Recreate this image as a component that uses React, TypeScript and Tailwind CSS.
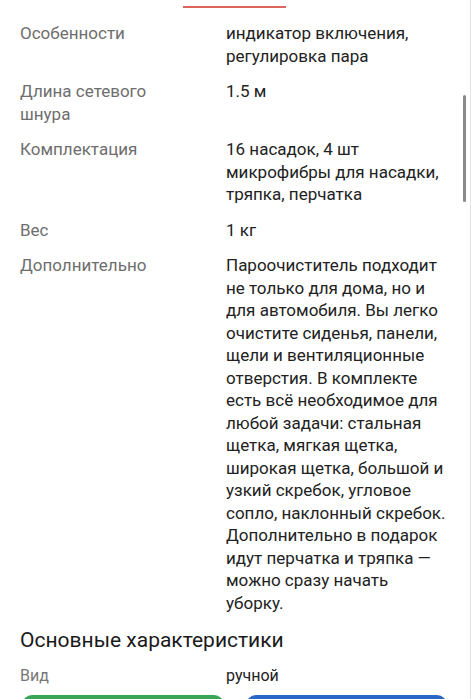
const rows: { label: string; value: string }[] = [
  { label: "Особенности", value: "индикатор включения, регулировка пара" },
  { label: "Длина сетевого шнура", value: "1.5 м" },
  { label: "Комплектация", value: "16 насадок, 4 шт микрофибры для насадки, тряпка, перчатка" },
  { label: "Вес", value: "1 кг" },
  {
    label: "Дополнительно",
    value:
      "Пароочиститель подходит не только для дома, но и для автомобиля. Вы легко очистите сиденья, панели, щели и вентиляционные отверстия. В комплекте есть всё необходимое для любой задачи: стальная щетка, мягкая щетка, широкая щетка, большой и узкий скребок, угловое сопло, наклонный скребок. Дополнительно в подарок идут перчатка и тряпка — можно сразу начать уборку.",
  },
]

export default function App() {
  return (
    <div
      className="relative h-[699px] w-[471px] overflow-hidden bg-white border-r border-[#e4e4e4]"
      style={{ fontFamily: "Roboto, 'Noto Sans', sans-serif" }}
    >
      {/* tab indicator */}
      <div className="flex h-[10px] justify-center">
        <div className="mt-[6px] ml-[-2px] h-[2px] w-[103px] bg-[#d9675a]" />
      </div>

      {/* spec list */}
      <div className="flex flex-col gap-[13px] pl-[20px] pt-[12px]">
        {rows.map((r) => (
          <div key={r.label} className="flex text-[17px] leading-[22.5px]">
            <div className="w-[206px] shrink-0 pr-[40px] text-[#6e6e6e]">{r.label}</div>
            <div className="w-[222px] text-[#222222]">{r.value}</div>
          </div>
        ))}
      </div>

      <h2 className="mt-[12px] pl-[20px] text-[21px] leading-[28px] text-[#1a1a1a]">
        Основные характеристики
      </h2>

      <div className="mt-[11px] flex pl-[20px] text-[16px] leading-[22px]">
        <div className="w-[206px] shrink-0 text-[#777777]">Вид</div>
        <div className="text-[#222222]">ручной</div>
      </div>

      {/* bottom buttons */}
      <div className="mt-[8px] flex gap-[22px] pl-[22px]">
        <div className="h-[40px] w-[202px] rounded-[10px] bg-[#3aa655]" />
        <div className="h-[40px] w-[201px] rounded-[10px] bg-[#2a66c8]" />
      </div>

      {/* scrollbar */}
      <div className="absolute right-[4px] top-[95px] h-[107px] w-[3px] rounded-full bg-[#8a8a8a]" />
    </div>
  )
}
